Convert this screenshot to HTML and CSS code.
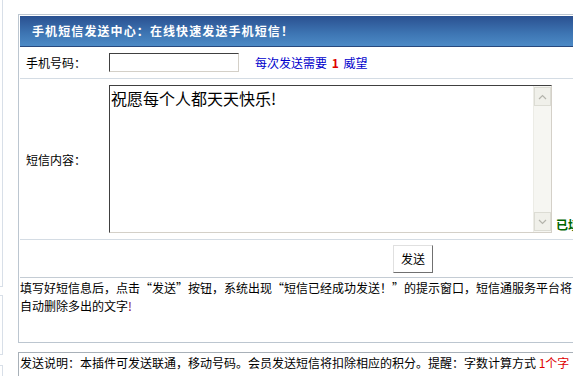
FILE: index.html
```html
<!DOCTYPE html>
<html lang="zh-CN">
<head>
    <meta charset="UTF-8">
    <title>手机短信发送中心</title>
    <link rel="stylesheet" href="styles.css">
</head>
<body>
    <div class="page">
        <div class="side">
            <div class="side-box side-top"></div>
            <div class="side-box side-mid"></div>
            <div class="side-box side-low"></div>
        </div>

        <div class="main">
            <div class="panel">
                <div class="panel-head">手机短信发送中心：在线快速发送手机短信！</div>

                <div class="row row-phone">
                    <div class="label">手机号码：</div>
                    <div class="field">
                        <input type="text" class="phone-input">
                        <span class="cost">每次发送需要 <b class="num">1</b> 威望</span>
                    </div>
                </div>

                <div class="row row-msg">
                    <div class="label">短信内容：</div>
                    <div class="field field-msg">
                        <div class="msg-box">
                            <textarea class="msg-input">祝愿每个人都天天快乐!</textarea>
                            <div class="scrollbar">
                                <div class="sb-btn">
                                    <svg width="9" height="6" viewBox="0 0 9 6"><path d="M1 5 L4.5 1.5 L8 5" fill="none" stroke="#b4b4ac" stroke-width="1.2"/></svg>
                                </div>
                                <div class="sb-track"></div>
                                <div class="sb-btn">
                                    <svg width="9" height="6" viewBox="0 0 9 6"><path d="M1 1 L4.5 4.5 L8 1" fill="none" stroke="#b4b4ac" stroke-width="1.2"/></svg>
                                </div>
                            </div>
                        </div>
                        <span class="count">已填写</span>
                    </div>
                </div>

                <div class="row row-send">
                    <button type="button" class="send-btn">发送</button>
                </div>

                <div class="tips">
                    填写好短信息后，点击“发送”按钮，系统出现“短信已经成功发送！”的提示窗口，短信通服务平台将<br>
                    自动删除多出的文字<span class="mark">!</span>
                </div>
            </div>

            <div class="notes">
                发送说明：本插件可发送联通，移动号码。会员发送短信将扣除相应的积分。提醒：字数计算方式 <span class="red">1个字</span>
            </div>
        </div>
    </div>
</body>
</html>
```

FILE: styles.css
```css
body {
    margin: 0;
    background: #fff;
    font-family: "Noto Sans CJK SC", "Liberation Sans", sans-serif;
    font-size: 12px;
    color: #000;
    overflow: hidden;
}

.page {
    display: flex;
    width: 700px;
}

/* bits of the left column */
.side {
    width: 3px;
    display: flex;
    flex-direction: column;
}

.side-box {
    border-right: 1px solid #d8dfe8;
}

.side-top {
    height: 286px;
    border-bottom: 1px solid #d8dfe8;
}

.side-mid {
    margin-top: 8px;
    height: 58px;
    border-top: 1px solid #d8dfe8;
    border-bottom: 1px solid #d8dfe8;
}

.side-low {
    margin-top: 10px;
    height: 20px;
    border-top: 1px solid #d8dfe8;
}

.main {
    margin-left: 15px;
    margin-top: 14px;
    width: 640px;
}

.panel {
    border: 1px solid #bcc6d0;
    padding: 1px 0 0 1px;
}

.panel-head {
    height: 30px;
    line-height: 30px;
    padding-left: 12px;
    color: #fff;
    font-weight: bold;
    letter-spacing: 1.1px;
    background: linear-gradient(#2a5090, #3e76b4 60%, #4c8ac6);
    border-bottom: 1px solid #27497e;
}

.row {
    display: flex;
    border-bottom: 1px solid #d4dce4;
}

.label {
    width: 82px;
    padding-left: 6px;
    display: flex;
    align-items: center;
}

.field {
    display: flex;
    align-items: center;
    padding-left: 1px;
}

.row-phone {
    height: 31px;
}

.phone-input {
    width: 126px;
    height: 15px;
    margin: 0;
    padding: 1px;
    border: 1px solid;
    border-color: #404040 #d4d0c8 #d4d0c8 #404040;
    font-size: 12px;
}

.cost {
    margin-left: 16px;
    color: #0000cc;
}

.num {
    color: #e00000;
    margin: 0 2px;
}

.row-msg {
    height: 160px;
}

.field-msg {
    align-items: flex-end;
    padding-bottom: 7px;
}

.msg-box {
    display: flex;
    width: 441px;
    height: 146px;
    border: 1px solid;
    border-color: #404040 #d4d0c8 #d4d0c8 #404040;
    margin-bottom: -1px;
}

.msg-input {
    flex: 1;
    margin: 0;
    padding: 2px 1px;
    border: none;
    resize: none;
    outline: none;
    overflow: hidden;
    font-family: "Noto Sans CJK SC", sans-serif;
    font-size: 16px;
    line-height: 20px;
}

.scrollbar {
    width: 17px;
    display: flex;
    flex-direction: column;
    background: #f6f6f2;
    border-left: 1px solid #ecece6;
}

.sb-btn {
    height: 17px;
    margin: 1px 0;
    display: flex;
    align-items: center;
    justify-content: center;
    background: #f0f0ea;
    border: 1px solid #dcdcd4;
}

.sb-track {
    flex: 1;
}

.count {
    margin-left: 4px;
    color: #006600;
    font-weight: bold;
    white-space: nowrap;
    line-height: 14px;
}

.row-send {
    height: 37px;
    align-items: center;
    padding-left: 373px;
    border-bottom-color: #c4ccd4;
}

.send-btn {
    width: 40px;
    height: 28px;
    padding: 0;
    font-family: inherit;
    font-size: 12px;
    background: #fff;
    border: 1px solid;
    border-color: #e0e0e0 #707070 #707070 #e0e0e0;
}

.tips {
    height: 63px;
    padding-top: 1px;
    line-height: 18px;
    white-space: nowrap;
    overflow: hidden;
}

.mark {
    color: #800040;
}

.notes {
    margin-top: 9px;
    height: 30px;
    padding-left: 1px;
    line-height: 20px;
    border-top: 1px solid #a8b0b8;
    border-left: 1px solid #a8b0b8;
    white-space: nowrap;
}

.red {
    color: #e00000;
}
```
